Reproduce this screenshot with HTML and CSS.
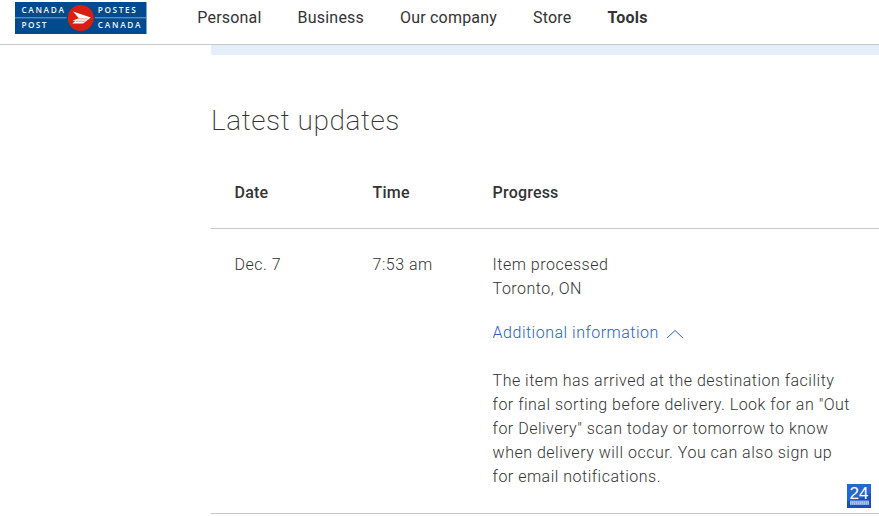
FILE: index.html
```html
<!DOCTYPE html>
<html lang="en">
  <head>
    <meta charset="utf-8">
    <title>Track</title>
    <link rel="stylesheet" href="styles.css">
  </head>
  <body>
    <header class="header">
      <a class="logo">
        <svg width="132" height="32" viewBox="0 0 132 32">
          <rect width="131.5" height="32" fill="#004b8d"/>
          <rect y="15.3" width="131.5" height="1" fill="#7fa5c8"/>
          <circle cx="65.7" cy="16" r="14.2" fill="#004b8d"/>
          <circle cx="65.7" cy="16" r="13" fill="#da1f12"/>
          <path d="M58 9.6 75.8 15.4 68.2 21.6 57.3 21.6 60.6 18.8 57.3 18.8 63.8 16.2Z" fill="#fff"/>
          <path d="M62.8 16.9H72.5M61 19.2H70" stroke="#e6786e" stroke-width=".8"/>
          <g class="logo-text">
            <text x="6.4" y="11.2" textLength="42.6">CANADA</text>
            <text x="6.4" y="25.8" textLength="25">POST</text>
            <text x="82.8" y="11.2" textLength="38">POSTES</text>
            <text x="82.8" y="25.8" textLength="42.8">CANADA</text>
          </g>
        </svg>
      </a>
      <nav class="nav">
        <a>Personal</a>
        <a>Business</a>
        <a>Our company</a>
        <a>Store</a>
        <a class="active">Tools</a>
      </nav>
    </header>
    <main class="main">
      <div class="banner"></div>
      <h2 class="title">Latest updates</h2>
      <div class="row row-head">
        <div>Date</div>
        <div>Time</div>
        <div>Progress</div>
      </div>
      <div class="row">
        <div>Dec. 7</div>
        <div>7:53 am</div>
        <div>
          <p>Item processed</p>
          <p>Toronto, ON</p>
          <a class="more">Additional information
            <svg width="18" height="10" viewBox="0 0 18 10"><path d="M1 9 9 1.5 17 9" fill="none" stroke="#2a61c2"/></svg>
          </a>
          <p class="detail">The item has arrived at the destination facility for final sorting before delivery. Look for an "Out for Delivery" scan today or tomorrow to know when delivery will occur. You can also sign up for email notifications.</p>
        </div>
      </div>
    </main>
    <!-- floating 24 badge -->
    <div class="badge">
      <svg width="24" height="24" viewBox="0 0 24 24">
        <rect width="24" height="24" fill="#2467cd"/>
        <path d="M0 17Q14 16 24 9V24H0Z" fill="#1950b8"/>
        <text class="badge-text" x="2.4" y="15" textLength="19">24</text>
        <rect x="3" y="16.5" width="19" height="4.5" fill="#86a8e2"/>
        <path d="M3 18.75H22" stroke="#adc5ee" stroke-width="3" stroke-dasharray="1 1"/>
      </svg>
    </div>
  </body>
</html>
```
FILE: styles.css
```css
* {
  margin: 0;
  padding: 0;
  box-sizing: border-box;
}
body {
  background-color: #fff;
  color: #333;
  font-family: Roboto, "Liberation Sans", sans-serif;
  font-size: 16px;
  font-weight: 300;
  line-height: 24px;
  letter-spacing: .5px;
  height: 516px;
  overflow: hidden;
}
.header {
  display: flex;
  height: 45px;
  padding-left: 15px;
  border-bottom: 1px solid #c8c8c8;
}
.logo {
  width: 132px;
  padding-top: 2px;
}
.logo svg, .badge svg {
  display: block;
}
.logo-text {
  fill: #f2f7fb;
  font-family: "Open Sans", sans-serif;
  font-size: 8.3px;
  font-weight: 600;
  letter-spacing: 0;
}
.nav {
  display: flex;
  gap: 36px;
  padding: 6px 0 0 50.3px;
  font-weight: 400;
  letter-spacing: .2px;
}
.nav .active {
  font-weight: 700;
}
.main {
  margin-left: 211px;
}
.banner {
  height: 10px;
  background-color: #e4eef9;
  border-radius: 0 0 0 2px;
}
.title {
  margin-top: 46px;
  font-size: 28px;
  font-weight: 200;
  line-height: 40px;
  letter-spacing: .6px;
}
.row {
  display: grid;
  grid-template-columns: 138px 120px 362px;
  padding: 24px 0 24px 23.6px;
  border-bottom: 1px solid #c8c8c8;
}
.row-head {
  margin-top: 16px;
  height: 72px;
  font-weight: 500;
  letter-spacing: .2px;
}
.more {
  display: flex;
  align-items: center;
  gap: 7px;
  margin-top: 20px;
  color: #2a61c2;
}
.more svg {
  margin-top: 2px;
}
.detail {
  margin-top: 24px;
}
.badge {
  position: absolute;
  left: 847px;
  top: 484px;
}
.badge-text {
  fill: #fff;
  font-family: "Liberation Sans", sans-serif;
  font-size: 17px;
  font-weight: 400;
  letter-spacing: 0;
}
```
